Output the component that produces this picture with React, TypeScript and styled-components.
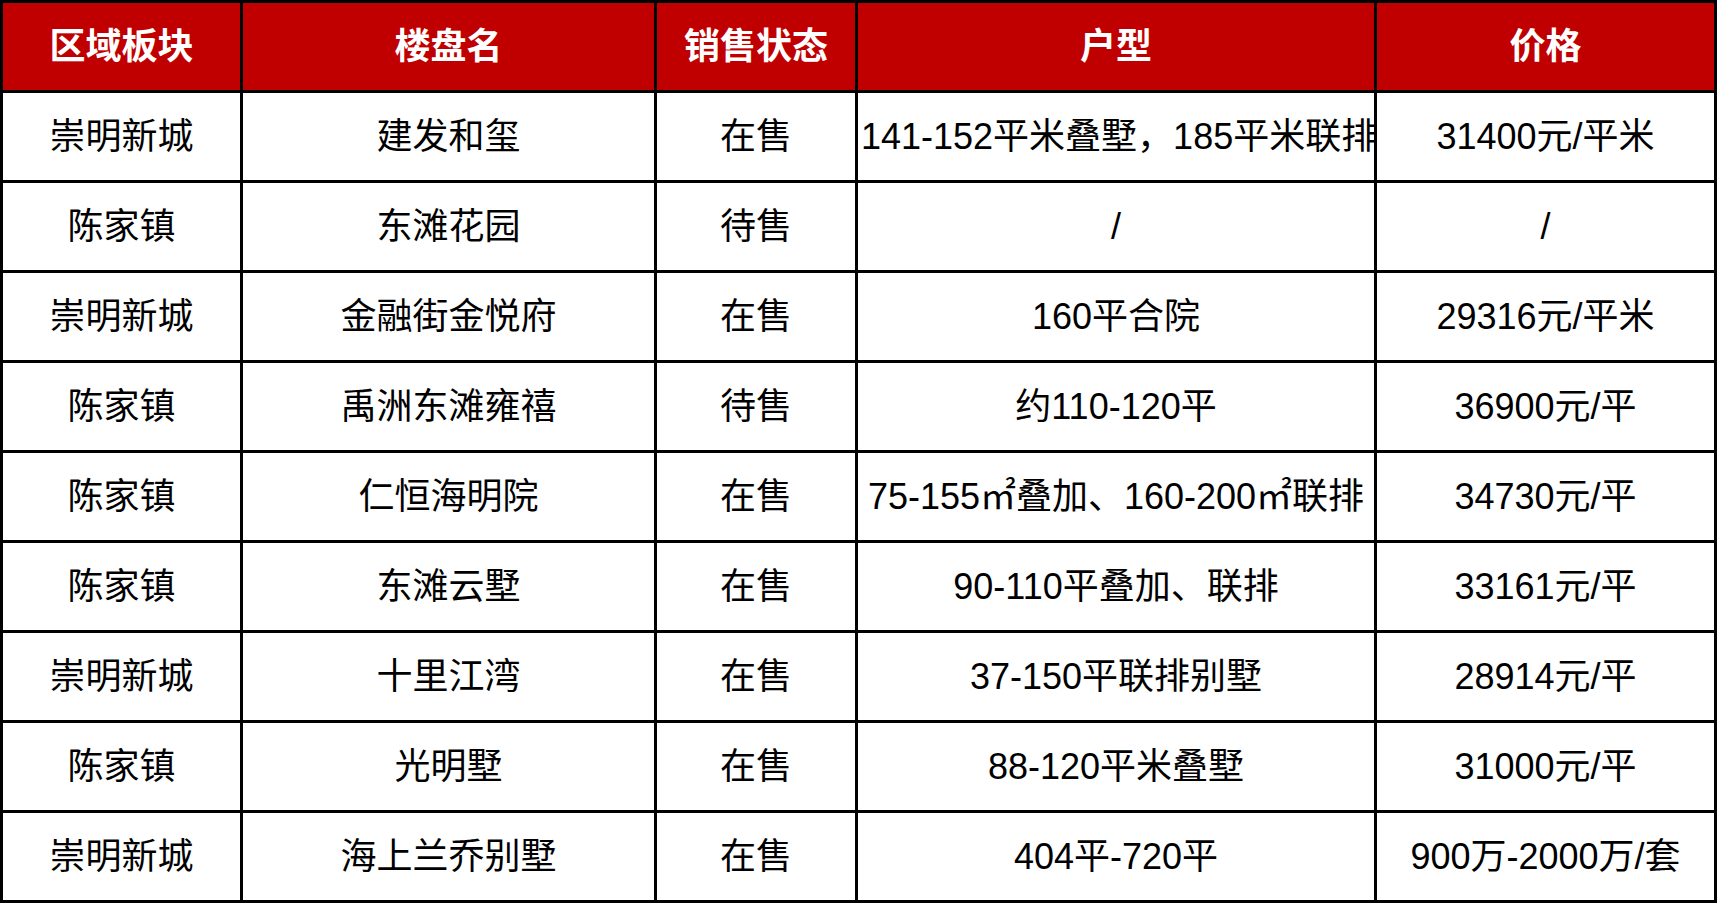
import React from 'react'
import styled, { createGlobalStyle } from 'styled-components'

const GlobalStyle = createGlobalStyle`
  html, body {
    margin: 0;
    padding: 0;
    background: #fff;
  }
`

const columns = ['区域板块', '楼盘名', '销售状态', '户型', '价格']

const rows: string[][] = [
  ['崇明新城', '建发和玺', '在售', '141-152平米叠墅，185平米联排', '31400元/平米'],
  ['陈家镇', '东滩花园', '待售', '/', '/'],
  ['崇明新城', '金融街金悦府', '在售', '160平合院', '29316元/平米'],
  ['陈家镇', '禹洲东滩雍禧', '待售', '约110-120平', '36900元/平'],
  ['陈家镇', '仁恒海明院', '在售', '75-155㎡叠加、160-200㎡联排', '34730元/平'],
  ['陈家镇', '东滩云墅', '在售', '90-110平叠加、联排', '33161元/平'],
  ['崇明新城', '十里江湾', '在售', '37-150平联排别墅', '28914元/平'],
  ['陈家镇', '光明墅', '在售', '88-120平米叠墅', '31000元/平'],
  ['崇明新城', '海上兰乔别墅', '在售', '404平-720平', '900万-2000万/套'],
]

const Table = styled.div`
  display: grid;
  grid-template-columns: 237px 411px 198px 516px 337px;
  grid-template-rows: repeat(10, 87px);
  gap: 3px;
  padding: 3px;
  width: 1717px;
  height: 903px;
  box-sizing: border-box;
  background: #000;
  font-family: 'Liberation Sans', 'Noto Sans CJK SC', sans-serif;
  font-size: 36px;
`

const Cell = styled.div<{ $head?: boolean }>`
  background: ${({ $head }) => ($head ? '#c00000' : '#fff')};
  color: ${({ $head }) => ($head ? '#fff' : '#000')};
  font-weight: ${({ $head }) => ($head ? 700 : 400)};
  line-height: 87px;
  text-align: center;
  white-space: nowrap;
  overflow: hidden;
  padding: 0 3px;
`

export default function App() {
  return (
    <>
      <GlobalStyle />
      <Table>
        {columns.map((c) => (
          <Cell key={c} $head>
            {c}
          </Cell>
        ))}
        {rows.map((r, i) => r.map((v, j) => <Cell key={`${i}-${j}`}>{v}</Cell>))}
      </Table>
    </>
  )
}
